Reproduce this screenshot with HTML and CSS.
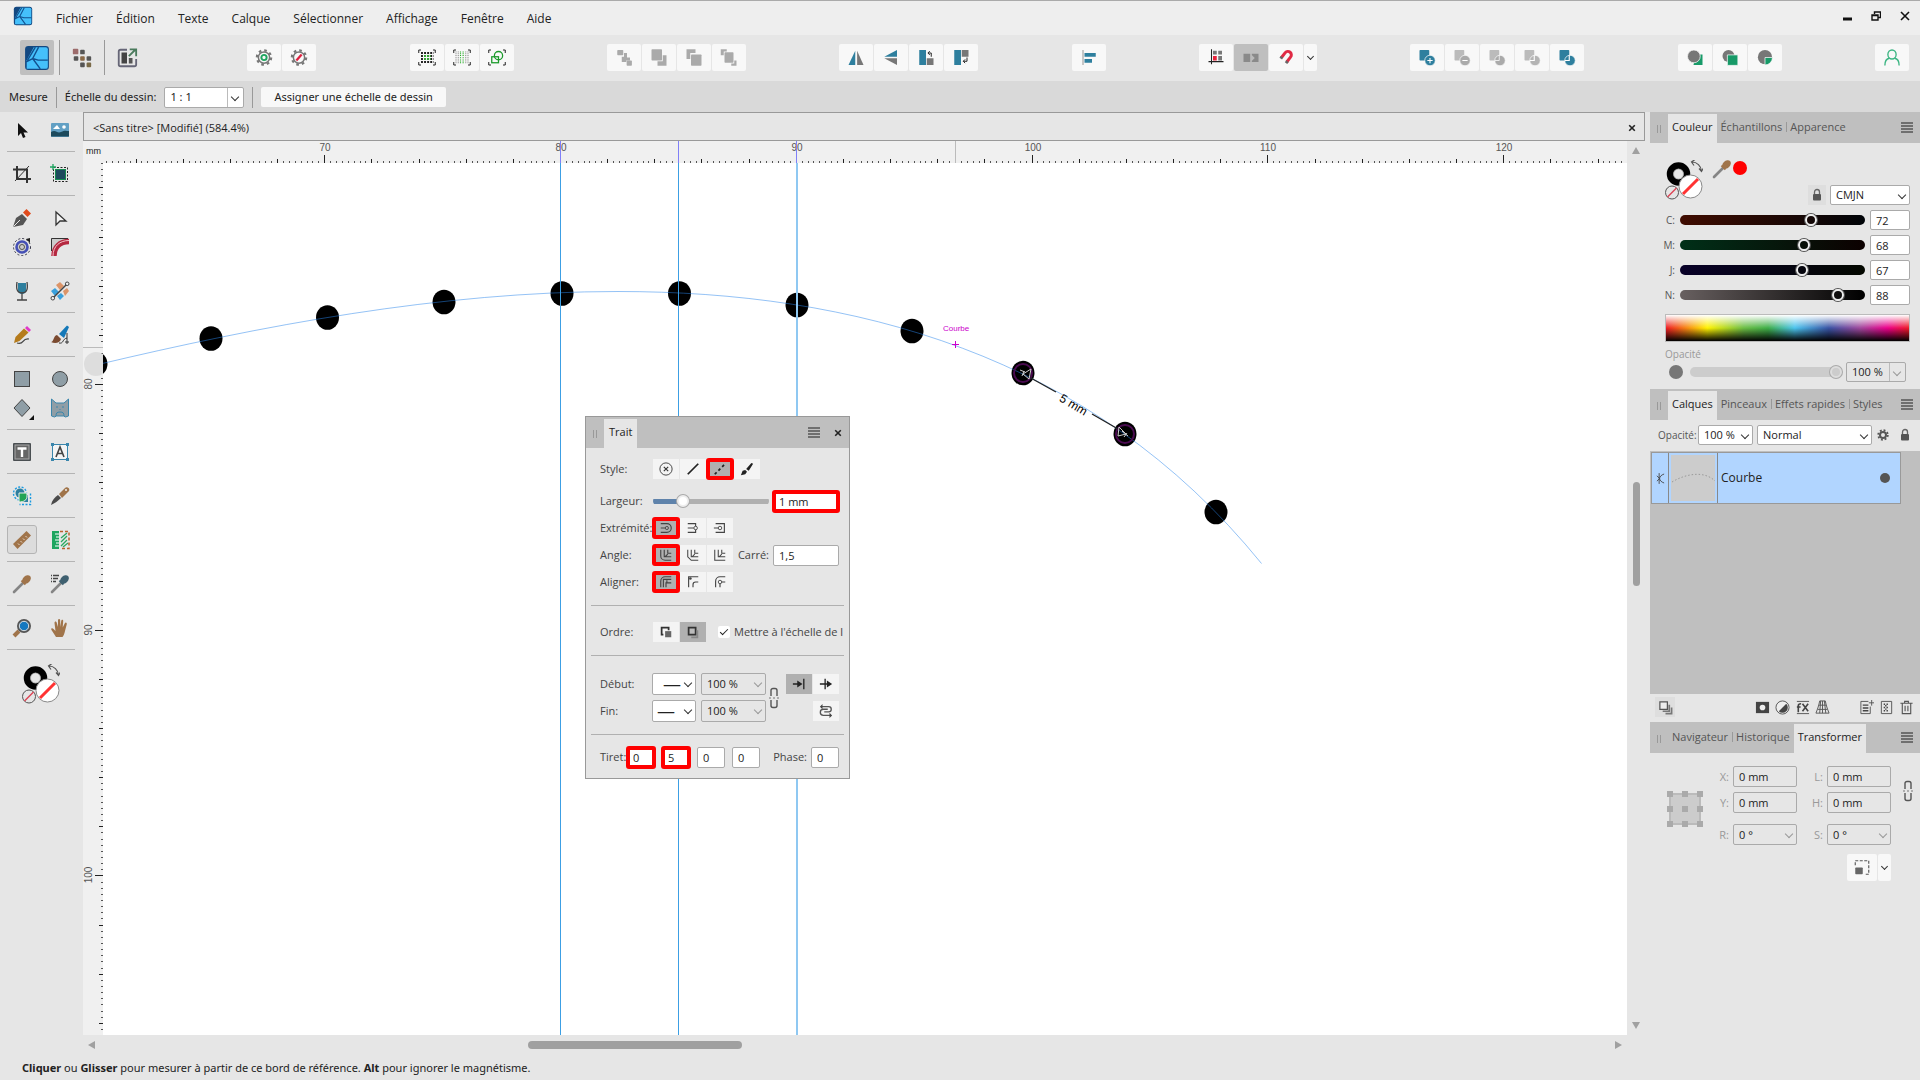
FILE: index.html
```html
<!DOCTYPE html>
<html lang="fr">
<head>
  <meta charset="UTF-8" />
  <meta name="viewport" content="width=device-width, initial-scale=1.0" />
  <title>Sans titre</title>
  <link rel="stylesheet" href="styles.css">
</head>
<body>
  <!-- shared icons -->
  <svg class="sprite" aria-hidden="true">
    <symbol id="i-logo" viewBox="0 0 24 24">
      <rect x="1" y="1" width="22" height="22" rx="3" fill="#134881"/>
      <path d="M9 2h11a2 2 0 0 1 2 2v16a2 2 0 0 1-2 2H2.500V14z" fill="#45c0fb"/>
      <path d="M10.500 2 3 14.500M13.500 2 8 12.500l5 1.500h9M2 15.500l6-3M8 12.500 15 22" stroke="#12508f" stroke-width="1.300" fill="none"/>
    </symbol>
    <symbol id="i-menu" viewBox="0 0 12 11"><path d="M0 1h12M0 4h12M0 7h12M0 10h12" stroke="#555" stroke-width="1.500"/></symbol>
    <symbol id="i-close" viewBox="0 0 10 10"><path d="M1.500 1.500l7 7M8.500 1.500l-7 7" stroke="#222" stroke-width="2"/></symbol>
    <symbol id="i-dropper" viewBox="0 0 20 20">
      <path d="M2 18 12 8" stroke="#858585" stroke-width="2.600" stroke-linecap="round"/>
      <ellipse cx="14.500" cy="5.500" rx="5" ry="3.600" transform="rotate(-45 14.500 5.500)" fill="currentColor"/>
      <path d="M9.500 6.500l4 4" stroke="currentColor" stroke-width="2"/>
    </symbol>
    <symbol id="i-lock" viewBox="0 0 10 14">
      <rect x="1" y="6" width="8" height="6.500" rx="1" fill="#555"/>
      <path d="M2.500 6V4a2.500 2.500 0 0 1 5 0v2" stroke="#666" stroke-width="1.300" fill="none"/>
    </symbol>
    <symbol id="i-chain" viewBox="0 0 10 22">
      <path d="M2 9V3.500A2 2 0 0 1 4 1.500h2a2 2 0 0 1 2 2V9M2 13v5.500a2 2 0 0 0 2 2h2a2 2 0 0 0 2-2V13" stroke="#555" stroke-width="1.400" fill="none"/>
      <path d="M0 11h2M4 11h2M8 11h2" stroke="#777"/>
    </symbol>
    <symbol id="i-wells" viewBox="0 0 38 42">
      <circle cx="13.500" cy="14" r="8.500" fill="none" stroke="#000" stroke-width="6.500"/>
      <circle cx="13.500" cy="14" r="5" fill="none" stroke="#999" stroke-width=".6"/>
      <circle cx="25.500" cy="26.500" r="11.500" fill="#fff" stroke="#888"/>
      <path d="M18 34 33 19" stroke="#f33" stroke-width="3"/>
      <circle cx="7" cy="32.500" r="6.500" fill="#e6e6e6" stroke="#555"/>
      <path d="M2.500 37 11.500 28" stroke="#d45" stroke-width="1.500"/>
      <path d="M27 2c5 0 9 4 9.500 9M30-.500 26.500 2 29 5.500M34 8.500l2.500 3 2-3.500" stroke="#555" stroke-width="1.200" fill="none"/>
    </symbol>
    <symbol id="i-gear" viewBox="0 0 24 24">
      <circle cx="12" cy="12" r="7.500" fill="none" stroke="#777" stroke-width="2"/>
      <circle cx="12" cy="12" r="9.500" fill="none" stroke="#777" stroke-width="3" stroke-dasharray="3.500 3.960"/>
    </symbol>
    <symbol id="i-corners" viewBox="0 0 24 24">
      <path d="M1 6V2h3M20 2h3v4M23 18v4h-3M4 22H1v-4" fill="none" stroke="#222" stroke-width="1.300"/>
    </symbol>
  </svg>

  <div class="app">
    <nav class="menubar">
      <svg class="app-logo"><use href="#i-logo"/></svg>
      <a href="#">Fichier</a>
      <a href="#">Édition</a>
      <a href="#">Texte</a>
      <a href="#">Calque</a>
      <a href="#">Sélectionner</a>
      <a href="#">Affichage</a>
      <a href="#">Fenêtre</a>
      <a href="#">Aide</a>
      <div class="window-buttons">
        <button aria-label="Réduire"><svg viewBox="0 0 10 10"><path d="M1 8h9" stroke="#111" stroke-width="3"/></svg></button>
        <button aria-label="Restaurer"><svg viewBox="0 0 10 10"><path d="M3.500 3V1h6v5.500h-2M1 4h6v5H1zM1 4.500h6" fill="none" stroke="#111" stroke-width="1.400"/></svg></button>
        <button aria-label="Fermer"><svg viewBox="0 0 10 10"><path d="M1 1l8 8M9 1 1 9" stroke="#111" stroke-width="1.600"/></svg></button>
      </div>
    </nav>

    <div class="toolbar">
      <div class="personas">
        <button class="active" aria-label="Designer"><svg class="big" viewBox="0 0 24 24"><use href="#i-logo"/></svg></button>
        <button aria-label="Pixel"><svg viewBox="0 0 24 24"><g fill="#555"><rect x="10" y="3" width="5" height="5" rx="1"/><rect x="3" y="10" width="5" height="5" rx="1"/><rect x="17" y="10" width="5" height="5" rx="1"/><rect x="10" y="17" width="5" height="5" rx="1"/></g><rect x="2" y="2" width="6" height="6" rx="1" fill="#9c6b6b"/><rect x="10" y="10" width="5" height="5" rx="1" fill="#8a6a48"/><rect x="17" y="17" width="5" height="5" rx="1" fill="#7a6a48"/></svg></button>
        <button aria-label="Exporter"><svg viewBox="0 0 24 24"><path d="M12 3H5a2 2 0 0 0-2 2v14a2 2 0 0 0 2 2h15a2 2 0 0 0 2-2v-6" fill="none" stroke="#667" stroke-width="2"/><rect x="6" y="6" width="6" height="12" fill="#444"/><rect x="14" y="12" width="4" height="6" fill="#555"/><path d="M14 10 21 3M15 2.500h7V10" fill="none" stroke="#4a7a5c" stroke-width="2"/></svg></button>
      </div>
      <div class="group">
        <button aria-label="Préférences"><svg viewBox="0 0 24 24"><use href="#i-gear"/><circle cx="12" cy="12" r="3.500" fill="none" stroke="#1ea560" stroke-width="2.600"/></svg></button>
        <button aria-label="Réinitialiser"><svg viewBox="0 0 24 24"><use href="#i-gear"/><path d="M8.500 16l7-8" stroke="#e02040" stroke-width="3"/></svg></button>
      </div>
      <div class="group">
        <button aria-label="Grille"><svg viewBox="0 0 24 24"><use href="#i-corners"/><path d="M4 6h17M4 10h17M4 14h17M4 18h17" stroke="#222" stroke-width="2.600" stroke-dasharray="2.600 1.500"/><path d="M8.100 10h9M8.100 14h9" stroke="#3a3" stroke-width="2.600" stroke-dasharray="2.600 1.500"/></svg></button>
        <button aria-label="Pixels"><svg viewBox="0 0 24 24"><use href="#i-corners"/><path d="M4 4v16M7 4v16M17 4v16M20 4v16" stroke="#777" stroke-width="1.300" stroke-dasharray="1.200 1.200"/><path d="M10 4v16M13.500 4v16" stroke="#2a2" stroke-width="1.500" stroke-dasharray="1.200 1.200"/></svg></button>
        <button aria-label="Aperçu"><svg viewBox="0 0 24 24"><use href="#i-corners"/><rect x="5" y="11" width="9" height="8" fill="none" stroke="#1a9a2a" stroke-width="1.700"/><circle cx="14" cy="9.500" r="5.500" fill="none" stroke="#1a9a2a" stroke-width="1.700"/></svg></button>
      </div>
      <div class="group">
        <button aria-label="Arrière-plan"><svg viewBox="0 0 24 24"><g fill="#aaa"><rect x="3" y="2" width="8" height="7" rx="1"/><path d="M12 6h4v6h4v4h-5v2h-6v-7h3z"/><rect x="15.500" y="16" width="7" height="7" rx="1"/></g></svg></button>
        <button aria-label="Reculer"><svg viewBox="0 0 24 24"><g fill="#aaa"><rect x="2" y="1" width="14" height="15" rx="1"/><path d="M17 9h5v14H10v-6h7z"/></g></svg></button>
        <button aria-label="Avancer"><svg viewBox="0 0 24 24"><g fill="#aaa"><path d="M2 1h12v5H7v8H2z"/><rect x="8" y="8" width="14" height="15" rx="1"/></g></svg></button>
        <button aria-label="Premier plan"><svg viewBox="0 0 24 24"><g fill="#aaa"><path d="M1 1h8v3H5v5H1zM22 16v7h-7v-3h4v-4z"/><rect x="6" y="5" width="12" height="14" rx="1"/></g></svg></button>
      </div>
      <div class="group">
        <button aria-label="Symétrie horizontale"><svg viewBox="0 0 24 24"><path d="M11 3v19H2z" fill="#2e7f9e"/><path d="M13.500 3v19H22z" fill="#777"/></svg></button>
        <button aria-label="Symétrie verticale"><svg viewBox="0 0 24 24"><path d="M20 2v9H3z" fill="#2e7f9e"/><path d="M20 22v-9H3z" fill="#777"/></svg></button>
        <button aria-label="Rotation antihoraire"><svg viewBox="0 0 24 24"><path d="M3 2h9v20H3z" fill="#2e7f9e"/><path d="M13 13h9v9h-9z" fill="#777"/><path d="M19 11V6h-4M17 3.500 14.500 6 17 8.500" fill="none" stroke="#222" stroke-width="1.300"/></svg></button>
        <button aria-label="Rotation horaire"><svg viewBox="0 0 24 24"><path d="M3 2h9v20H3z" fill="#2e7f9e"/><path d="M13 2h9v9h-9z" fill="#777"/><path d="M20 12v5h-5M17.500 14.500 15 17l2.500 2.500" fill="none" stroke="#222" stroke-width="1.300"/></svg></button>
      </div>
      <div class="group">
        <button aria-label="Alignement"><svg viewBox="0 0 24 24"><path d="M4 2v20" stroke="#777"/><path d="M6 6h15v5H6zM6 14h10v5H6z" fill="#2e7f9e"/></svg></button>
      </div>
      <div class="group">
        <button aria-label="Aligner sur la grille"><svg viewBox="0 0 24 24"><path d="M6 1v20M2 17.500h20" stroke="#222" stroke-width="1.400"/><path d="M8 3h5v5H8zM15 3h5v5h-5zM15 10h5v6h-5z" fill="#777"/><path d="M8 10h5v6H8z" fill="#e8243c"/></svg></button>
        <button class="active" aria-label="Déplacer par pixels"><svg viewBox="0 0 24 24"><path d="M2 7h9v11H2zM13 7h9v11h-9z" fill="#8a8a8a"/><path d="M12 7.500 17 12.500l-5 5z" fill="#bbb"/></svg></button>
        <button aria-label="Magnétisme"><svg viewBox="0 0 24 24"><path d="M6 12l5-6.500a4.500 4.500 0 0 1 7 6L13 18" fill="none" stroke="#e02a44" stroke-width="4"/><path d="M6.500 11 5 13.500M14 17l-2 2.500" stroke="#666" stroke-width="4"/></svg></button>
        <button class="narrow" aria-label="Options de magnétisme"><span class="chevron"></span></button>
      </div>
      <div class="group">
        <button aria-label="Ajouter"><svg viewBox="0 0 24 24"><rect x="2" y="2" width="13" height="14" rx="1" fill="#2e7f9e"/><circle cx="16" cy="16" r="7" fill="#2e7f9e" stroke="#f8f8f8"/><path d="M16 12.500v7M12.500 16h7" stroke="#fff" stroke-width="1.400"/></svg></button>
        <button aria-label="Soustraire"><svg viewBox="0 0 24 24"><rect x="2" y="2" width="13" height="14" rx="1" fill="#bbb"/><circle cx="16" cy="16" r="7" fill="#aaa" stroke="#f8f8f8"/><path d="M12.500 16h7" stroke="#fff" stroke-width="1.400"/></svg></button>
        <button aria-label="Intersection"><svg viewBox="0 0 24 24"><rect x="2" y="2" width="13" height="14" rx="1" fill="#bbb"/><circle cx="16" cy="16" r="7" fill="#aaa" stroke="#f8f8f8"/><path d="M15 9v7H9" fill="none" stroke="#fff"/></svg></button>
        <button aria-label="Diviser"><svg viewBox="0 0 24 24"><rect x="2" y="2" width="13" height="14" rx="1" fill="#bbb"/><circle cx="16" cy="16" r="7" fill="#b4b4b4" stroke="#f8f8f8"/><path d="M15 9v7H9" fill="none" stroke="#fff" stroke-width="1.500"/></svg></button>
        <button aria-label="Combiner"><svg viewBox="0 0 24 24"><rect x="2" y="2" width="13" height="14" rx="1" fill="#2e7f9e"/><circle cx="16" cy="16" r="7" fill="#2e7f9e" stroke="#f8f8f8"/><path d="M15 9v7H9" fill="none" stroke="#fff" stroke-width="1.500"/></svg></button>
      </div>
      <div class="group">
        <button aria-label="Insérer derrière"><svg viewBox="0 0 24 24"><path d="M13 8h9v14H10z" fill="#179a68"/><circle cx="10.500" cy="10.500" r="8.500" fill="#777" stroke="#f8f8f8"/></svg></button>
        <button aria-label="Insérer au-dessus"><svg viewBox="0 0 24 24"><circle cx="10" cy="10" r="8" fill="#777"/><path d="M8.500 8.500h14v14h-14z" fill="#179a68" stroke="#f8f8f8"/></svg></button>
        <button aria-label="Insérer à l'intérieur"><svg viewBox="0 0 24 24"><circle cx="12" cy="11.500" r="9.500" fill="#777"/><path d="M12 12h10a10 10 0 0 1-10 10z" fill="#179a68" stroke="#f8f8f8"/></svg></button>
      </div>
      <div class="group">
        <button aria-label="Compte"><svg viewBox="0 0 24 24"><ellipse cx="12" cy="8" rx="5.500" ry="6" fill="none" stroke="#3cb583" stroke-width="1.800"/><path d="M2.500 22.500c0-6 3-9 6-9.500M21.500 22.500c0-6-3-9-6-9.500" fill="none" stroke="#3cb583" stroke-width="1.800"/></svg></button>
      </div>
    </div>

    <div class="context-bar">
      <span>Mesure</span>
      <i class="vsep"></i>
      <label for="scale">Échelle du dessin:</label>
      <span class="select split scale"><select id="scale"><option>1 : 1</option></select></span>
      <i class="vsep"></i>
      <button class="assign">Assigner une échelle de dessin</button>
    </div>

    <main class="workspace">
      <aside class="tools">
        <div class="tool-group">
          <button aria-label="Déplacement"><svg viewBox="0 0 20 20"><path d="M6 3v13l3-3 2 5 2.500-1-2-4.500H16z" fill="#111"/></svg></button>
          <button aria-label="Image"><svg viewBox="0 0 20 20"><rect x="1" y="3" width="18" height="14" rx="1" fill="#62a0c4"/><path d="M1 12c5-3 6 2 10 0s5-1 8-1v5.500H1z" fill="#1d4a5c"/><path d="M3 9l4-4 3 4z" fill="#fff"/><circle cx="14" cy="7" r="1.800" fill="#fff"/></svg></button>
        </div>
        <div class="tool-group">
          <button aria-label="Recadrage"><svg viewBox="0 0 20 20"><path d="M5 2v13h14M1 5.500h14V19" fill="none" stroke="#333" stroke-width="2"/><path d="M3 17 17 2" stroke="#333"/></svg></button>
          <button aria-label="Plan de travail"><svg viewBox="0 0 20 20"><rect x="3.500" y="3.500" width="14" height="14" fill="none" stroke="#222" stroke-dasharray="2 1.500"/><rect x="5.500" y="5.500" width="10" height="10" fill="#1d4a5c" stroke="#158a50"/><path d="M3 0v6M0 3h6" stroke="#1ea560" stroke-width="1.300"/></svg></button>
        </div>
        <div class="tool-group">
          <button aria-label="Plume"><svg viewBox="0 0 20 20"><path d="M1 19 4 10l6-4 5 5-4 6z" fill="#555"/><path d="M1.500 18.500 8 12" stroke="#e6e6e6"/><path d="M11 4.500 14.500 1 19 5.500 15.500 9z" fill="#e04a1c"/></svg></button>
          <button aria-label="Nœud"><svg viewBox="0 0 20 20"><path d="M6 4v13l4-4h6z" fill="#f4f4f4" stroke="#333" stroke-width="1.300"/></svg></button>
          <button aria-label="Contour"><svg viewBox="0 0 20 20"><circle cx="10" cy="10" r="8.500" fill="none" stroke="#334" stroke-dasharray="2 2"/><circle cx="10" cy="10" r="5.500" fill="#ccc" stroke="#4550b5" stroke-width="2.600"/><circle cx="10" cy="10" r="2.500" fill="none" stroke="#555"/><path d="M14 2l4-1v5z" fill="#222"/></svg></button>
          <button aria-label="Angle"><svg viewBox="0 0 20 20"><path d="M1 14V1h17L5 12z" fill="#ccc"/><path d="M1.500 14V1.500H18" fill="none" stroke="#333"/><path d="M4 19C4 10 10 4.500 19 4.500" fill="none" stroke="#b52840" stroke-width="5.500"/><path d="M3 19C3 9 10 3.500 19 3.500" fill="none" stroke="#f3c0c8"/></svg></button>
        </div>
        <div class="tool-group">
          <button aria-label="Transparence"><svg viewBox="0 0 20 20"><path d="M6 2h8v7a4 4 0 0 1-8 0z" fill="#2e7f9e"/><path d="M5 1c-1 7 0 11 5 11s6-4 5-11M10 12v7M5 19h10" fill="none" stroke="#444" stroke-width="1.300"/></svg></button>
          <button aria-label="Dégradé"><svg viewBox="0 0 20 20"><path d="M6 4l4-3 4 4-4 4zM13 10l4-3 2 3-4 5z" fill="#dc9468"/><path d="M1 10l4-3 4 4-4 4zM7 15l4-3 3 3-4 4z" fill="#3aa0dc"/><path d="M3 17 17 3" stroke="#444" stroke-width="1.400"/><circle cx="2.800" cy="17.200" r="1.800" fill="#eee" stroke="#444"/><circle cx="17.200" cy="2.800" r="1.800" fill="#eee" stroke="#444"/></svg></button>
        </div>
        <div class="tool-group">
          <button aria-label="Crayon"><svg viewBox="0 0 20 20"><path d="M2 18 3.500 12 12 3.500l4.500 4L7.500 16z" fill="#b57b1c"/><path d="M13 3l2-2 4 4-2 2z" fill="#e038c8"/><path d="M5 18c8 2 4-5 12-4" fill="none" stroke="#444" stroke-width="1.200"/></svg></button>
          <button aria-label="Pinceau vectoriel"><svg viewBox="0 0 20 20"><path d="M9 9 17 .500 19 2l-5 11z" fill="#1478b8"/><path d="M1 17c3 0 2-6 6-7l4 4c-1 4-6 5-10 3z" fill="#7a4a30"/><path d="M9 18c5 1 3-4 8-5M17 8v11M15 17h4" fill="none" stroke="#333"/></svg></button>
        </div>
        <div class="tool-group">
          <button aria-label="Rectangle"><svg viewBox="0 0 20 20"><rect x="2.500" y="2.500" width="15" height="15" fill="#8f9ea6" stroke="#444"/></svg></button>
          <button aria-label="Ellipse"><svg viewBox="0 0 20 20"><circle cx="10" cy="10" r="7.500" fill="#8f9ea6" stroke="#444"/></svg></button>
          <button aria-label="Formes"><svg viewBox="0 0 20 20"><path d="M10 1.500 18 10l-8 8.500L2 10z" fill="#8f9ea6" stroke="#444"/><path d="M22 17v5h-5z" fill="#111"/></svg></button>
          <button aria-label="Chat"><svg viewBox="0 0 20 20"><path d="M1.500 1 6 5h8l4.500-4v17l-3 1-2-1h-7l-2 1-3-1z" fill="#8f9ea6" stroke="#3a86ac"/><path d="M6 9h2M12 9h2M9.500 11.500h1M6 18c0-3 1-4 4-4s4 1 4 4" stroke="#3a86ac" fill="none"/></svg></button>
        </div>
        <div class="tool-group">
          <button aria-label="Texte cadre"><svg viewBox="0 0 20 20"><rect x="1" y="1" width="18" height="18" rx="1" fill="#4a4f52"/><rect x="3" y="3" width="14" height="14" fill="#666" stroke="#aaa"/><path d="M5.500 6.500h9M10 6v9" stroke="#fff" stroke-width="2.400"/></svg></button>
          <button aria-label="Texte artistique"><svg viewBox="0 0 20 20"><rect x="2.500" y="2.500" width="15" height="15" fill="#f4f4f4" stroke="#3a86ac"/><path d="M1 1h3v3H1zM16 1h3v3h-3zM1 16h3v3H1zM16 16h3v3h-3z" fill="#3a86ac"/><path d="M6 15l4-10 4 10M7.500 11.500h5" fill="none" stroke="#444" stroke-width="1.600"/></svg></button>
        </div>
        <div class="tool-group">
          <button aria-label="Constructeur de forme"><svg viewBox="0 0 20 20"><circle cx="8" cy="7" r="4.500" fill="#2e7f9e"/><path d="M10 9h6v7h-6z" fill="#2e7f9e"/><circle cx="8" cy="7.500" r="6.500" fill="none" stroke="#1a9ae0" stroke-width="1.400" stroke-dasharray="2 1.500"/><path d="M18.500 7.500v11h-11" fill="none" stroke="#1a9ae0" stroke-width="1.400" stroke-dasharray="2 1.500"/><path d="M7 7h8v3c0 4-3 6-8 6z" fill="#23a455" stroke="#eee"/></svg></button>
          <button aria-label="Couteau"><svg viewBox="0 0 20 20"><path d="M1 19c1-5 4-8 7-10l3 3c-3 3-6 5-10 7z" fill="#4a4a4a"/><path d="M9 8 15 2c2-2 6 1 3.500 3.500L12 12z" fill="#a0744a"/><circle cx="16" cy="4" r="1" fill="#eee"/></svg></button>
        </div>
        <div class="tool-group">
          <button class="active" aria-label="Mesure"><svg viewBox="0 0 20 20"><path d="M1 14 14.500 1 19 5.500 5.500 19z" fill="#a0744a"/><path d="M6 13.500l1.500 1.500M8.500 11l1.500 1.500M11 8.500l1.500 1.500M13.500 6l1.500 1.500" stroke="#e8d8c8"/></svg></button>
          <button aria-label="Zone"><svg viewBox="0 0 20 20"><path d="M2 1h7v18H2z" fill="#1ea560"/><path d="M5 4h4M6 7h3M5 10h4M6 13h3M5 16h4" stroke="#fff"/><path d="M11 8l6-5M11 12l6-6M11 16l6-6M13 17l5-4" stroke="#2aa860" stroke-width="1.300"/><path d="M10 1.500h9v17h-9" fill="none" stroke="#b8622c" stroke-width="1.500" stroke-dasharray="3 2"/></svg></button>
        </div>
        <div class="tool-group">
          <button class="brown" aria-label="Pipette"><svg viewBox="0 0 20 20"><use href="#i-dropper"/></svg></button>
          <button class="slate" aria-label="Pipette de style"><svg viewBox="0 0 20 20"><use href="#i-dropper"/><path d="M1 1.500h1M3 1.500h6M1 4.500h1M3 4.500h5M1 7.500h1M3 7.500h3" stroke="#444" stroke-width="1.300"/></svg></button>
        </div>
        <div class="tool-group">
          <button aria-label="Zoom"><svg viewBox="0 0 20 20"><path d="M2 18l5-5" stroke="#a0744a" stroke-width="4"/><circle cx="12" cy="8" r="6" fill="#1478c0" stroke="#555" stroke-width="2"/><circle cx="12" cy="8" r="4.700" fill="none" stroke="#ddd"/></svg></button>
          <button aria-label="Vue"><svg viewBox="0 0 20 20"><path d="M6 19 1.500 12c-1-2 1-2.500 2-1l2 2-1-8c0-2 2-2 2.300 0L8 9V2.500c0-2 2.200-2 2.200 0V9l1-6c.3-2 2.200-1.600 2 0l-.5 6.500 2-4c.8-1.600 2.500-1 2 1L15 13c-.6 3-1.500 5-2.500 6z" fill="#a0744a"/></svg></button>
        </div>
        <svg class="tool-wells" viewBox="0 0 38 42"><use href="#i-wells"/></svg>
      </aside>

      <section class="document">
        <header class="doc-tab">
          <span>&lt;Sans titre&gt; [Modifié] (584.4%)</span>
          <button aria-label="Fermer le document"><svg viewBox="0 0 10 10"><use href="#i-close"/></svg></button>
        </header>
        <div class="canvas">
          <div class="unit">mm</div>
          <svg class="hruler" id="hruler"></svg>
          <svg class="vruler" id="vruler"></svg>
          <div class="artboard">
            <svg class="drawing">
              <g transform="translate(-103 -163)">
                <g id="dots"></g>
                <path class="curve" d="M96 365 C260 326 440 291.500 618 291.500 C850 291.500 1090 352 1261.500 563.500"/>
                <g class="measure">
                  <circle cx="1023" cy="373" r="9"/><circle cx="1125" cy="434" r="9"/>
                  <path d="M1029 377l27 15M1092 414l26 15" stroke="#222" stroke-width="1.300"/>
                  <path d="M1023 374l8-5-2 10zM1020 370l5 2M1022 376l2-5M1119 427l-1 9 8-2zM1122 431l6 5M1124 437l3-4" stroke="#ccc" fill="none"/>
                  <text x="1074" y="404" transform="rotate(31 1074 404)" dy="5">5 mm</text>
                </g>
                <path d="M955.500 341v7M952 344.500h7" stroke="#c0c"/>
                <text class="hint" x="943" y="331">Courbe</text>
              </g>
              <g class="guides">
                <line x1="457.500" x2="457.500" y2="100%"/>
                <line x1="575.500" x2="575.500" y2="100%"/>
                <line class="soft" x1="694" x2="694" y2="100%"/>
              </g>
            </svg>

            <form class="stroke-panel">
              <header class="panel-tabs">
                <i class="grip"></i>
                <button type="button" class="tab active">Trait</button>
                <svg class="burger"><use href="#i-menu"/></svg>
                <svg class="close"><use href="#i-close"/></svg>
              </header>
              <div class="stroke-body">
                <div class="row style-row">
                  <span class="label">Style:</span>
                  <div class="seg">
                    <button type="button" aria-label="Aucun"><svg viewBox="0 0 16 16"><circle cx="8" cy="8" r="7" fill="none" stroke="#333"/><path d="M5.500 5.500l5 5M10.500 5.500l-5 5" stroke="#333" stroke-width="1.300"/></svg></button>
                    <button type="button" aria-label="Plein"><svg viewBox="0 0 16 16"><path d="M2 14 14 2" stroke="#222" stroke-width="2"/></svg></button>
                    <button type="button" class="active marked" aria-label="Tirets"><svg viewBox="0 0 16 16"><path d="M2 14 14 2" stroke="#222" stroke-width="2" stroke-dasharray="3 3"/></svg></button>
                    <button type="button" aria-label="Pinceau"><svg viewBox="0 0 16 16"><path d="M7 8l6-7 2 1-5 8zM1 15l2-5 3-1 2 2-2 3z" fill="#222"/></svg></button>
                  </div>
                </div>
                <div class="row">
                  <label class="label" for="width">Largeur:</label>
                  <input class="width-slider" type="range" aria-label="Largeur" min="0" max="100" value="23">
                  <input class="field width marked" id="width" value="1 mm">
                </div>
                <div class="row">
                  <span class="label">Extrémité:</span>
                  <div class="seg">
                    <button type="button" class="active marked" aria-label="Arrondie"><svg viewBox="0 0 16 16"><path d="M2 3h7a5 5 0 0 1 0 10H2M2 8h5" fill="none" stroke="#444" stroke-width="1.300"/><circle cx="9" cy="8" r="1.800" fill="none" stroke="#444"/></svg></button>
                    <button type="button" aria-label="Plate"><svg viewBox="0 0 16 16"><path d="M2 3h9v10H2M2 8h7" fill="none" stroke="#444" stroke-width="1.300"/><circle cx="11" cy="8" r="2" fill="#f4f4f4" stroke="#444"/></svg></button>
                    <button type="button" aria-label="Carrée"><svg viewBox="0 0 16 16"><path d="M3 3h10v10H3M1 8h5" fill="none" stroke="#444" stroke-width="1.300"/><circle cx="8" cy="8" r="2" fill="none" stroke="#444"/></svg></button>
                  </div>
                </div>
                <div class="row">
                  <span class="label">Angle:</span>
                  <div class="seg">
                    <button type="button" class="active marked" aria-label="Rond"><svg viewBox="0 0 16 16"><path d="M2 2v7a5 5 0 0 0 5 5h7M6 2v8h8M10 2v4h4M7 10l3-3" fill="none" stroke="#444" stroke-width="1.300"/></svg></button>
                    <button type="button" aria-label="Biseau"><svg viewBox="0 0 16 16"><path d="M2 2v8l4 4h8M6 2v8h8M10 2v4h4M7 10l3-3" fill="none" stroke="#444" stroke-width="1.200"/></svg></button>
                    <button type="button" aria-label="Vif"><svg viewBox="0 0 16 16"><path d="M2 2v12h12M6 2v8h8M10 2v4h4M7 10l3-3" fill="none" stroke="#444" stroke-width="1.200"/></svg></button>
                  </div>
                  <label class="end" for="miter">Carré:</label>
                  <input class="field width" id="miter" value="1,5">
                </div>
                <div class="row">
                  <span class="label">Aligner:</span>
                  <div class="seg">
                    <button type="button" class="active marked" aria-label="Centre"><svg viewBox="0 0 16 16"><path d="M2 14V7a5 5 0 0 1 5-5h7M5 14V5h9M8 14V9h6M9 9V6" fill="none" stroke="#444" stroke-width="1.300"/></svg></button>
                    <button type="button" aria-label="Intérieur"><svg viewBox="0 0 16 16"><path d="M3 14V2h11M8 14v-3a3 3 0 0 1 3-3h3" fill="none" stroke="#444" stroke-width="1.300"/><circle cx="5" cy="4" r="1.500" fill="#444"/></svg></button>
                    <button type="button" aria-label="Extérieur"><svg viewBox="0 0 16 16"><path d="M3 14V7a5 5 0 0 1 5-5h6M8 14V8h6" fill="none" stroke="#444" stroke-width="1.300"/><circle cx="8" cy="8" r="2" fill="#f4f4f4" stroke="#444"/></svg></button>
                  </div>
                </div>
                <hr>
                <div class="row">
                  <span class="label">Ordre:</span>
                  <div class="seg">
                    <button type="button" aria-label="Derrière"><svg viewBox="0 0 16 16"><path d="M3 11V3h8v3M3 3v8h2" fill="none" stroke="#333" stroke-width="2"/><rect x="7" y="7" width="7" height="7" fill="#666"/></svg></button>
                    <button type="button" class="active" aria-label="Devant"><svg viewBox="0 0 16 16"><path d="M3 3h8v8H3z" fill="#bbb" stroke="#333" stroke-width="2"/><path d="M13 6v8H6" fill="none" stroke="#888" stroke-width="2"/></svg></button>
                  </div>
                  <label class="check"><input type="checkbox" checked><span>Mettre à l'échelle de l</span></label>
                </div>
                <hr class="wide">
                <div class="ends">
                  <label class="label" for="start">Début:</label>
                  <span class="select line shifted"><select id="start"><option>—</option></select></span>
                  <span class="select off pct"><select aria-label="Échelle début"><option>100 %</option></select></span>
                  <svg class="chain" viewBox="0 0 10 22"><use href="#i-chain"/></svg>
                  <div class="seg">
                    <button type="button" class="active" aria-label="Flèche dans la ligne"><svg viewBox="0 0 16 16"><path d="M1 8h8M13.500 2v12" stroke="#222" stroke-width="1.500"/><path d="M6 4l6 4-6 4z" fill="#222"/></svg></button>
                    <button type="button" aria-label="Flèche hors ligne"><svg viewBox="0 0 16 16"><path d="M1 8h10M7 2v12" stroke="#222" stroke-width="1.500"/><path d="M9 4l6 4-6 4z" fill="#222"/></svg></button>
                  </div>
                  <label class="label" for="stop">Fin:</label>
                  <span class="select line"><select id="stop"><option>—</option></select></span>
                  <span class="select off pct"><select aria-label="Échelle fin"><option>100 %</option></select></span>
                  <div class="seg">
                    <button type="button" aria-label="Permuter"><svg viewBox="0 0 16 16"><path d="M3 3h8a3 3 0 0 1 0 6H6M13 13H5a3.500 3.500 0 0 1 0-7h5" fill="none" stroke="#555" stroke-width="1.500"/><path d="M4 0v6L1 3zM12 10v6l3-3z" fill="#444"/></svg></button>
                  </div>
                </div>
                <hr class="tight">
                <div class="row dashes">
                  <span class="dash-label">Tiret:</span>
                  <input class="field dash marked" aria-label="Tiret 1" value="0">
                  <input class="field dash marked" aria-label="Espace 1" value="5">
                  <input class="field dash" aria-label="Tiret 2" value="0">
                  <input class="field dash" aria-label="Espace 2" value="0">
                  <label class="end" for="phase">Phase:</label>
                  <input class="field dash" id="phase" value="0">
                </div>
              </div>
            </form>
          </div>
          <div class="vscroll"><i class="arrow up"></i><i class="thumb"></i><i class="arrow down"></i></div>
          <div class="hscroll"><i class="arrow left"></i><i class="thumb"></i><i class="arrow right"></i></div>
        </div>
      </section>

      <aside class="panels">
        <section>
          <header class="panel-tabs">
            <i class="grip"></i>
            <button class="tab active">Couleur</button>
            <button class="tab">Échantillons</button>
            <button class="tab">Apparence</button>
            <svg class="burger"><use href="#i-menu"/></svg>
          </header>
          <div class="color-body">
            <div class="color-head">
              <svg class="wells" viewBox="0 0 38 42"><use href="#i-wells"/></svg>
              <svg class="dropper brown"><use href="#i-dropper"/></svg>
              <i class="picked"></i>
              <div class="mode">
                <button class="lock" aria-label="Verrouiller"><svg viewBox="0 0 10 14"><use href="#i-lock"/></svg></button>
                <span class="select"><select aria-label="Modèle"><option>CMJN</option></select></span>
              </div>
            </div>
            <div class="channel"><label for="c">C:</label><input type="range" class="c" aria-label="Cyan" value="72"><input class="field" id="c" value="72"></div>
            <div class="channel"><label for="m">M:</label><input type="range" class="m" aria-label="Magenta" value="68"><input class="field" id="m" value="68"></div>
            <div class="channel"><label for="j">J:</label><input type="range" class="j" aria-label="Jaune" value="67"><input class="field" id="j" value="67"></div>
            <div class="channel"><label for="n">N:</label><input type="range" class="n" aria-label="Noir" value="88"><input class="field" id="n" value="88"></div>
            <div class="spectrum"></div>
            <label class="muted" for="opacity">Opacité</label>
            <div class="opacity-row">
              <i class="tone"></i>
              <input type="range" class="opacity" id="opacity" value="100">
              <span class="select split off"><select aria-label="Opacité"><option>100 %</option></select></span>
            </div>
          </div>
        </section>

        <section>
          <header class="panel-tabs">
            <i class="grip"></i>
            <button class="tab active">Calques</button>
            <button class="tab">Pinceaux</button>
            <button class="tab">Effets rapides</button>
            <button class="tab">Styles</button>
            <svg class="burger"><use href="#i-menu"/></svg>
          </header>
          <div class="layer-options">
            <label for="layer-opacity">Opacité:</label>
            <span class="select"><select id="layer-opacity"><option>100 %</option></select></span>
            <span class="select blend"><select aria-label="Mode de fusion"><option>Normal</option></select></span>
            <svg class="small" viewBox="0 0 12 12"><circle cx="6" cy="6" r="3" fill="none" stroke="#555" stroke-width="2"/><circle cx="6" cy="6" r="4.800" fill="none" stroke="#555" stroke-width="1.800" stroke-dasharray="1.900 1.870"/></svg>
            <svg class="small" viewBox="0 0 10 14"><use href="#i-lock"/></svg>
          </div>
          <div class="layer-list">
            <div class="layer">
              <span class="kind"><svg viewBox="0 0 10 14"><path d="M1 4l3 3-3 3M3.500 1v12M9 2C6 3 4 5 4 7s2 4 5 5" fill="none" stroke="#444"/></svg></span>
              <span class="thumb-cell"><svg viewBox="0 0 44 46"><rect width="44" height="46" fill="#ccc"/><path d="M1 27C16 18 34 16 44 26" fill="none" stroke="#999" stroke-dasharray="1.500 2"/></svg></span>
              <span class="name">Courbe</span>
              <i class="visible"></i>
            </div>
          </div>
          <div class="layer-actions">
            <button class="first" aria-label="Calques"><svg viewBox="0 0 16 16"><path d="M2 2h8v8H2z" fill="#eee" stroke="#555" stroke-width="1.300"/><path d="M12 5v7H5M14.500 8v6.500H8" fill="none" stroke="#777" stroke-width="1.800"/></svg></button>
            <button aria-label="Masque"><svg viewBox="0 0 16 16"><rect x="1" y="2" width="14" height="12" fill="#444"/><circle cx="8" cy="8" r="3" fill="#eee"/></svg></button>
            <button aria-label="Réglage"><svg viewBox="0 0 16 16"><circle cx="8" cy="8" r="7" fill="#eee" stroke="#555"/><path d="M12 4A5.500 5.500 0 0 1 4 12z" fill="#444"/></svg></button>
            <button aria-label="Effets"><svg viewBox="0 0 16 16"><path d="M2 1.500h13M2 14.500h13" stroke="#555"/><path d="M3.500 13V6q0-2 3-2M2 7.500h4M8 4l6 8M14 4l-6 8" fill="none" stroke="#444" stroke-width="1.700"/></svg></button>
            <button aria-label="Filtre"><svg viewBox="0 0 16 16"><path d="M5 1h6c1 5 2 8 4 13H1C3 9 4 6 5 1zM8 1v13M4 5.500h8M3 10h10M6 1 5 14M10 1l1.500 13" fill="none" stroke="#555"/></svg></button>
            <button class="gap" aria-label="Nouveau calque"><svg viewBox="0 0 16 16"><path d="M10 1.500H2v13h10V7M13.500 0v6M10.500 3h6" fill="none" stroke="#555"/><path d="M4 5.500h6M4 8.500h6M4 11.500h6" stroke="#444" stroke-width="1.500"/></svg></button>
            <button aria-label="Nouveau calque de pixels"><svg viewBox="0 0 16 16"><path d="M2.500 1.500h11v13h-11z" fill="none" stroke="#555"/><path d="M5 4.500h6M5 8h6M5 11.500h6M6.500 6.200h3M6.500 9.700h3" stroke="#444" stroke-width="1.500" stroke-dasharray="1.500 1.500"/></svg></button>
            <button aria-label="Supprimer"><svg viewBox="0 0 16 16"><path d="M1.500 3.500h13M6 3.500v-2h4v2M3.500 3.500v11h9v-11M6.500 6v6M9.500 6v6" fill="none" stroke="#555" stroke-width="1.200"/></svg></button>
          </div>
        </section>

        <section class="transform">
          <header class="panel-tabs">
            <i class="grip"></i>
            <button class="tab">Navigateur</button>
            <button class="tab">Historique</button>
            <button class="tab active">Transformer</button>
            <svg class="burger"><use href="#i-menu"/></svg>
          </header>
          <div class="transform-body">
            <svg class="anchor" viewBox="0 0 36 38"><rect x="3" y="4" width="30" height="30" fill="#ccc" stroke="#bbb" stroke-width="2"/><path d="M0 1h6v6H0zM15 1h6v6h-6zM30 1h6v6h-6zM0 16h6v6H0zM15 16h6v6h-6zM30 16h6v6h-6zM0 31h6v6H0zM15 31h6v6h-6zM30 31h6v6h-6z" fill="#aaa"/></svg>
            <div class="fields">
              <label for="x">X:</label><input class="field" id="x" value="0 mm">
              <label for="l">L:</label><input class="field" id="l" value="0 mm">
              <label for="y">Y:</label><input class="field" id="y" value="0 mm">
              <label for="h">H:</label><input class="field" id="h" value="0 mm">
              <label class="spaced" for="r">R:</label><span class="select off spaced"><select id="r"><option>0 °</option></select></span>
              <label class="spaced" for="s">S:</label><span class="select off spaced"><select id="s"><option>0 °</option></select></span>
              <div class="group scale-mode">
                <button aria-label="Mise à l'échelle"><svg viewBox="0 0 24 24"><path d="M3 9V3h18v18h-6" fill="none" stroke="#555" stroke-width="1.500" stroke-dasharray="4 2"/><rect x="3" y="12" width="10" height="9" rx="1" fill="#666"/></svg></button>
                <button class="narrow" aria-label="Options"><span class="chevron"></span></button>
              </div>
            </div>
            <svg class="chain" viewBox="0 0 10 22"><use href="#i-chain"/></svg>
          </div>
        </section>
      </aside>
    </main>

    <footer class="status"><b>Cliquer</b> ou <b>Glisser</b> pour mesurer à partir de ce bord de référence. <b>Alt</b> pour ignorer le magnétisme.</footer>
  </div>

  <script>
    const NS = "http://www.w3.org/2000/svg";

    function add(parent, name, attrs, text) {
      const el = document.createElementNS(NS, name);
      for (const key in attrs) el.setAttribute(key, attrs[key]);
      if (text !== undefined) el.textContent = text;
      parent.appendChild(el);
      return el;
    }

    // one tick every 0.25 mm, longer every 2 mm, labelled every 10 mm
    function drawRuler(id, vertical, origin, value, step) {
      const svg = document.getElementById(id);
      const size = vertical ? svg.clientHeight : svg.clientWidth;
      svg.innerHTML = "";
      const first = Math.ceil(-origin / step * 40);
      for (let i = first; origin + i * step / 40 < size; i++) {
        const pos = Math.floor(origin + i * step / 40);
        const len = i % 40 === 0 ? 8 : i % 8 === 0 ? 4 : 2;
        const color = { fill: len === 2 ? "#555" : "#222" };
        if (vertical) add(svg, "rect", { x: 20 - len, y: pos, width: len, height: 1, ...color });
        else add(svg, "rect", { x: pos, y: 22 - len, width: 1, height: len, ...color });
        if (i % 40 === 0) {
          const label = value + i / 4;
          if (vertical) add(svg, "text", { x: 9, y: pos, transform: `rotate(-90 9 ${pos})` }, label);
          else add(svg, "text", { x: pos + 1, y: 10 }, label);
        }
      }
      return svg;
    }

    function drawRulers() {
      const h = drawRuler("hruler", false, 221.7, 70, 235.8);
      [457, 575, 693].forEach(x => add(h, "rect", { x, y: 0, width: 1, height: 22, fill: "#8080f8" }));
      add(h, "rect", { x: 852, y: 0, width: 1, height: 22, fill: "#bbb" });
      const v = drawRuler("vruler", true, 221.5, 80, 245.7);
      add(v, "rect", { x: 0, y: 184, width: 20, height: 1, fill: "#bbb" });
      add(v, "circle", { cx: 13, cy: 201, r: 12, fill: "#ddd" });
    }

    const dots = [[96, 364], [211, 338.5], [327.5, 317.5], [444, 302], [562, 293.5], [679.5, 293.5],
      [797, 305], [912, 331], [1023, 373], [1125, 434], [1216, 512]];
    dots.forEach(([cx, cy]) => add(document.getElementById("dots"), "ellipse", { cx, cy, rx: 11.5, ry: 12.3 }));

    drawRulers();
    window.onresize = drawRulers;
  </script>
</body>
</html>
```

FILE: styles.css
```css
* {
  box-sizing: border-box;
}

body {
  margin: 0;
  background: #e6e6e6;
  color: #222;
  font-family: "Noto Sans", "Open Sans", sans-serif;
  font-size: 11px;
  line-height: 16px;
}

button, input, select {
  font: inherit;
  color: inherit;
  margin: 0;
}

button {
  border: 0;
  padding: 0;
  background: none;
  display: flex;
  align-items: center;
  justify-content: center;
}

a {
  color: inherit;
  text-decoration: none;
}

svg {
  display: block;
  flex: none;
}

.sprite {
  position: absolute;
  width: 0;
  height: 0;
}

.app {
  display: flex;
  flex-direction: column;
  min-height: 100vh;
}

/* menu */
.menubar {
  display: flex;
  align-items: center;
  gap: 23px;
  height: 35px;
  padding: 2px 10px 0 13px;
  background: #eee;
  border-top: 1px solid #aaa;
  font-family: "Open Sans", sans-serif;
  font-size: 12px;
}

.app-logo {
  width: 20px;
  height: 22px;
  margin-bottom: 6px;
}

.window-buttons {
  display: flex;
  gap: 19px;
  margin-left: auto;
  margin-bottom: 6px;
}

.window-buttons svg {
  width: 10px;
  height: 10px;
}

/* toolbar */
.toolbar {
  display: flex;
  align-items: center;
  justify-content: space-between;
  height: 46px;
  padding: 0 11px 1px 20px;
}

.personas {
  display: flex;
  width: 134px;
}

.personas button {
  width: 45px;
  height: 35px;
  border-left: 1px solid #999;
}

.personas button:first-child {
  width: 34px;
  margin-right: 5px;
  border: 0;
  border-radius: 2px;
}

.personas svg {
  width: 22px;
  height: 24px;
}

.personas svg.big {
  width: 26px;
  height: 28px;
}

.group {
  display: flex;
  gap: 1px;
}

.group button {
  width: 34px;
  height: 27px;
  background: #f8f8f8;
  border-radius: 2px;
}

.group button.narrow {
  width: 13px;
}

.group svg {
  width: 18px;
  height: 19px;
}

.toolbar .active {
  background: #bfbfbf;
}

.chevron {
  width: 5px;
  height: 5px;
  border: solid #333;
  border-width: 0 1px 1px 0;
  transform: rotate(45deg);
  margin-bottom: 3px;
}

/* context bar */
.context-bar {
  display: flex;
  align-items: center;
  gap: 8px;
  height: 31px;
  padding: 1px 9px 0;
  background: #d9d9d9;
}

.vsep {
  width: 1px;
  height: 21px;
  background: #999;
}

.assign {
  height: 20px;
  padding: 0 13px;
  background: #f8f8f8;
  border-radius: 2px;
}

.scale {
  width: 80px;
}

/* form controls */
.field, .select {
  height: 21px;
  background: #fff;
  border: 1px solid #aaa;
  border-radius: 2px;
}

.field {
  padding: 0 5px;
  min-width: 0;
}

.select {
  position: relative;
  display: block;
}

.select select {
  display: block;
  width: 100%;
  height: 100%;
  padding: 0 5px;
  border: 0;
  background: none;
  appearance: none;
}

.select::after {
  content: "";
  position: absolute;
  right: 4px;
  top: 6px;
  width: 5px;
  height: 5px;
  border: solid #333;
  border-width: 0 1px 1px 0;
  transform: rotate(45deg);
  pointer-events: none;
}

.select.split::before {
  content: "";
  position: absolute;
  right: 15px;
  top: 0;
  bottom: 0;
  border-left: 1px solid #bbb;
}

.select.split::after {
  right: 5px;
}

.select.off {
  background: #e6e6e6;
}

.select.off::after {
  border-color: #999;
}

.marked {
  outline: 4px solid #f00;
  outline-offset: -3px;
  border-radius: 2px;
}

input[type="range"] {
  appearance: none;
  min-width: 0;
  margin: 0;
  height: 10px;
  border-radius: 5px;
}

input[type="range"]::-webkit-slider-thumb {
  appearance: none;
  width: 12px;
  height: 12px;
  border: 2px solid #eee;
  border-radius: 50%;
  background: transparent;
  box-shadow: 0 0 0 1px #555;
}

/* left tools */
.workspace {
  display: flex;
  flex: 1;
}

.tools {
  width: 83px;
  padding: 3px 8px 0 7px;
}

.tool-group {
  display: grid;
  grid-template-columns: 30px 30px;
  grid-auto-rows: 29px;
  column-gap: 8px;
  margin-bottom: 7px;
  padding-bottom: 7px;
  border-bottom: 1px solid #b4b4b4;
}

.tool-group button.active {
  background: #dcdcdc;
  border: 1px solid #b4b4b4;
  border-radius: 3px;
}

.tool-group svg {
  width: 20px;
  height: 20px;
  overflow: visible;
}

.tool-wells {
  width: 38px;
  height: 42px;
  margin: 14px 0 0 15px;
}

.brown {
  color: #a0744a;
}

.slate {
  color: #3f6070;
}

/* document */
.document {
  display: flex;
  flex-direction: column;
  flex: 1;
  min-width: 0;
  margin-right: 5px;
}

.doc-tab {
  display: flex;
  align-items: center;
  justify-content: space-between;
  height: 29px;
  padding: 2px 8px 0 9px;
  border: 1px solid #999;
  font-family: "Open Sans", sans-serif;
}

.doc-tab svg {
  width: 8px;
  height: 8px;
}

.canvas {
  display: grid;
  grid-template-columns: 20px 1fr 18px;
  grid-template-rows: 22px 1fr 19px;
  flex: 1;
}

.unit {
  padding: 3px 0 0 3px;
  background: #f0f0f0;
  font: 9px/14px "Liberation Sans", sans-serif;
}

.hruler, .vruler {
  width: 100%;
  height: 100%;
  background: #f0f0f0;
  font: 10px "Liberation Sans", sans-serif;
  text-anchor: middle;
  fill: #555;
}

.artboard {
  position: relative;
  background: #fff;
  overflow: hidden;
}

.drawing {
  position: absolute;
  width: 100%;
  height: 100%;
}

.curve {
  fill: none;
  stroke: #2a86ec;
  stroke-opacity: 0.5;
}

.guides line {
  stroke: #3c9fe4;
}

.guides .soft {
  stroke: #8fc8f2;
  stroke-width: 2;
}

.measure circle {
  fill: none;
  stroke: #4a0a50;
  stroke-width: 2;
}

.measure text {
  font: 12px "Liberation Sans", sans-serif;
  text-anchor: middle;
}

.hint {
  font: 8px "Liberation Sans", sans-serif;
  fill: #c0c;
}

.vscroll, .hscroll {
  display: flex;
  align-items: center;
  justify-content: space-between;
}

.vscroll {
  grid-row: 1 / 3;
  grid-column: 3;
  flex-direction: column;
  padding: 6px 0;
}

.hscroll {
  grid-column: 1 / 3;
  padding: 0 5px;
}

.thumb {
  background: #a0a0a0;
  border-radius: 4px;
}

.vscroll .thumb {
  width: 7px;
  height: 104px;
  margin-bottom: 108px;
}

.hscroll .thumb {
  width: 214px;
  height: 8px;
  margin-right: 440px;
}

.arrow {
  border: 4px solid transparent;
}

.arrow.up {
  border-bottom: 7px solid #a0a0a0;
  border-top: 0;
}

.arrow.down {
  border-top: 7px solid #a0a0a0;
  border-bottom: 0;
}

.arrow.left {
  border-right: 7px solid #a0a0a0;
  border-left: 0;
}

.arrow.right {
  border-left: 7px solid #a0a0a0;
  border-right: 0;
}

/* panel headers */
.panel-tabs {
  display: flex;
  align-items: center;
  height: 31px;
  padding: 2px 7px 0 7px;
  background: #bfbfbf;
}

.grip {
  width: 4px;
  height: 8px;
  margin-right: 7px;
  border: solid #999;
  border-width: 0 1px;
}

.tab {
  height: 100%;
  padding: 0 4px 4px;
  color: #555;
}

.tab.active {
  padding: 0 4px 4px;
  background: #e6e6e6;
  color: #222;
}

.tab:not(.active) + .tab:not(.active)::before {
  content: "";
  width: 1px;
  height: 10px;
  margin-right: 3px;
  background: #999;
}

.tab:not(.active) + .tab:not(.active) {
  padding-left: 0;
}

.burger {
  width: 12px;
  height: 11px;
  margin: 0 0 3px auto;
}

/* stroke panel */
.stroke-panel {
  position: absolute;
  left: 482px;
  top: 253px;
  width: 265px;
  border: 1px solid #999;
  background: #e6e6e6;
  color: #444;
  font-family: "Open Sans", sans-serif;
}

.stroke-panel .close {
  width: 8px;
  height: 8px;
  margin: 0 0 2px 14px;
}

.stroke-panel .tab {
  padding: 0 5px 4px;
}

.stroke-panel .field, .stroke-panel select {
  color: #222;
}

.stroke-body {
  display: flex;
  flex-direction: column;
  gap: 5px;
  padding: 10px 5px;
}

.row {
  display: flex;
  align-items: center;
  height: 22px;
  padding: 0 5px 0 9px;
}

.style-row {
  margin-bottom: 5px;
}

.label {
  flex: none;
  width: 53px;
}

.seg {
  display: flex;
  flex: none;
  gap: 1px;
}

.seg button {
  width: 26px;
  height: 20px;
  background: #f4f4f4;
}

.seg button.active {
  background: #b0b0b0;
}

.seg svg {
  width: 14px;
  height: 14px;
}

.stroke-body hr {
  width: 100%;
  height: 1px;
  margin: 7px 0 10px;
  border: 0;
  background: #b0b0b0;
}

.stroke-body hr.wide {
  margin-bottom: 12px;
}

.stroke-body hr.tight {
  margin-bottom: 6px;
}

.width-slider {
  width: 116px;
  background: linear-gradient(to right, #5f83ab 25%, #b0b0b0 25%) center / 100% 5px no-repeat;
}

.width-slider::-webkit-slider-thumb {
  background: #fff !important;
  box-shadow: 0 0 0 1px #aaa !important;
}

.width {
  width: 66px;
  margin-left: auto;
}

.end {
  margin-left: auto;
}

.end + .width {
  margin-left: 4px;
}

.check {
  display: flex;
  align-items: center;
  gap: 4px;
  margin-left: 12px;
  white-space: nowrap;
}

.check input {
  appearance: none;
  flex: none;
  width: 12px;
  height: 12px;
  background: #fff;
  border-radius: 2px;
  display: grid;
  place-items: center;
}

.check input::before {
  content: "";
  width: 7px;
  height: 3px;
  border: solid #222;
  border-width: 0 0 1px 1px;
  transform: rotate(-45deg);
  margin-bottom: 2px;
}

.ends {
  display: grid;
  grid-template-columns: 52px 44px 70px 14px 1fr;
  grid-auto-rows: 22px;
  row-gap: 5px;
  align-items: center;
  padding: 0 5px 0 9px;
}

.ends .select {
  height: 22px;
}

.ends .pct {
  margin-left: 5px;
}

.ends .chain {
  grid-row: 1 / 3;
  grid-column: 4;
  margin-left: 3px;
}

.ends .seg {
  justify-content: flex-end;
  grid-column: 5;
}

.line select {
  padding: 0 4px;
  font-size: 18px;
  line-height: 18px;
}

.line.shifted select {
  padding-left: 10px;
}

.dashes {
  gap: 7px;
}

.dash-label {
  width: 20px;
  white-space: nowrap;
}

.dash {
  width: 28px;
}

.dashes .end + .dash {
  margin-left: -3px;
}

.chain {
  width: 10px;
  height: 22px;
}

/* right panels */
.panels {
  display: flex;
  flex-direction: column;
  width: 270px;
  font-family: "Open Sans", sans-serif;
}

.panels .select, .panels .field {
  height: 20px;
}

.color-body {
  height: 246px;
  padding: 16px 10px 0 15px;
}

.color-head {
  display: flex;
  align-items: flex-start;
  height: 46px;
  margin-bottom: 5px;
}

.wells {
  width: 38px;
  height: 42px;
  margin-top: 1px;
}

.dropper {
  width: 20px;
  height: 20px;
  margin-left: 9px;
}

.picked {
  width: 14px;
  height: 14px;
  margin: 2px 0 0 1px;
  border-radius: 50%;
  background: #f00;
}

.mode {
  display: flex;
  gap: 4px;
  align-self: flex-end;
  margin-left: auto;
}

.mode .select {
  width: 80px;
}

.lock {
  width: 18px;
  background: #dedede;
}

.lock svg {
  width: 10px;
  height: 14px;
}

.channel {
  display: grid;
  grid-template-columns: 10px 1fr 40px;
  gap: 5px;
  align-items: center;
  height: 20px;
  margin-bottom: 5px;
  color: #555;
}

.channel label {
  font-size: 10px;
  justify-self: end;
}

.channel .field {
  color: #222;
}

.c {
  background: linear-gradient(to right, #400c00, #000408);
}

.m {
  background: linear-gradient(to right, #003018, #0c0000);
}

.j {
  background: linear-gradient(to right, #080028, #040800);
}

.n {
  background: linear-gradient(to right, #686060, #000);
}

.spectrum {
  height: 28px;
  margin: 9px 0 4px;
  border: 1px solid #bbb;
  background:
    linear-gradient(to bottom, #fff, transparent 50%, #000),
    linear-gradient(to right, #ee1c25, #fff200 17%, #6cbe45 32%, #3fae49 42%, #4cc4ee 53%, #3953a4 67%, #a0489c 80%, #ec008c 91%, #ee1c25);
}

.muted {
  display: block;
  color: #999;
  font-size: 10px;
}

.opacity-row {
  display: flex;
  align-items: center;
  padding: 0 4px;
}

.tone {
  width: 14px;
  height: 14px;
  margin-right: 7px;
  border-radius: 50%;
  background: #777;
}

.opacity {
  width: 152px;
  background: #ccc;
}

.opacity::-webkit-slider-thumb {
  border-color: #ddd !important;
  background: #ccc !important;
  box-shadow: 0 0 0 1px #aaa !important;
}

.opacity-row .select {
  width: 60px;
  margin-left: auto;
}

.layer-options {
  display: flex;
  align-items: center;
  gap: 4px;
  height: 31px;
  padding: 0 9px 1px 8px;
  color: #555;
}

.layer-options label {
  width: 36px;
  font-size: 10px;
  white-space: nowrap;
}

.layer-options select {
  color: #222;
}

.layer-options .select {
  width: 55px;
}

.layer-options .blend {
  width: 115px;
  margin-right: 1px;
}

.small {
  width: 12px;
  height: 14px;
}

.small:last-child {
  margin-left: auto;
}

.layer-list {
  height: 243px;
  background: #bfbfbf;
  padding: 1px;
}

.layer {
  display: flex;
  align-items: center;
  width: 250px;
  height: 52px;
  padding-right: 10px;
  background: #b1d5ff;
  border: 1px solid #999;
}

.kind {
  display: flex;
  align-items: center;
  justify-content: center;
  width: 17px;
  height: 100%;
  border-right: 1px solid #888;
}

.kind svg {
  width: 9px;
  height: 13px;
}

.thumb-cell {
  padding: 2px;
  border-right: 1px solid #888;
}

.thumb-cell svg {
  width: 44px;
  height: 46px;
}

.name {
  margin-left: 3px;
  font-size: 12px;
}

.visible {
  width: 10px;
  height: 10px;
  margin-left: auto;
  border-radius: 50%;
  background: #555;
}

.layer-actions {
  display: flex;
  align-items: center;
  height: 28px;
  padding: 0 4px 2px 5px;
}

.layer-actions button {
  width: 20px;
  height: 20px;
}

.layer-actions .first {
  margin-right: auto;
  background: #dedede;
}

.layer-actions .gap {
  margin-left: 24px;
}

.layer-actions svg {
  width: 15px;
  height: 15px;
}

.transform-body {
  display: flex;
  padding: 13px 7px 0 17px;
  color: #999;
}

.transform .field, .transform .select {
  height: 21px;
  background: #e6e6e6;
  color: #222;
}

.anchor {
  width: 36px;
  height: 38px;
  margin-top: 24px;
}

.fields {
  display: grid;
  grid-template-columns: 26px 64px 22px 64px;
  gap: 5px 4px;
  align-items: center;
  margin-right: auto;
  text-align: right;
}

.fields .field {
  text-align: left;
}

.fields .spaced {
  margin-top: 6px;
}

.scale-mode {
  grid-column: 1 / 5;
  justify-content: flex-end;
  margin-top: 4px;
}

.scale-mode button {
  width: 30px;
}

.transform-body .chain {
  margin-top: 14px;
}

/* status */
.status {
  height: 26px;
  padding: 6px 22px;
  color: #222;
}
```
